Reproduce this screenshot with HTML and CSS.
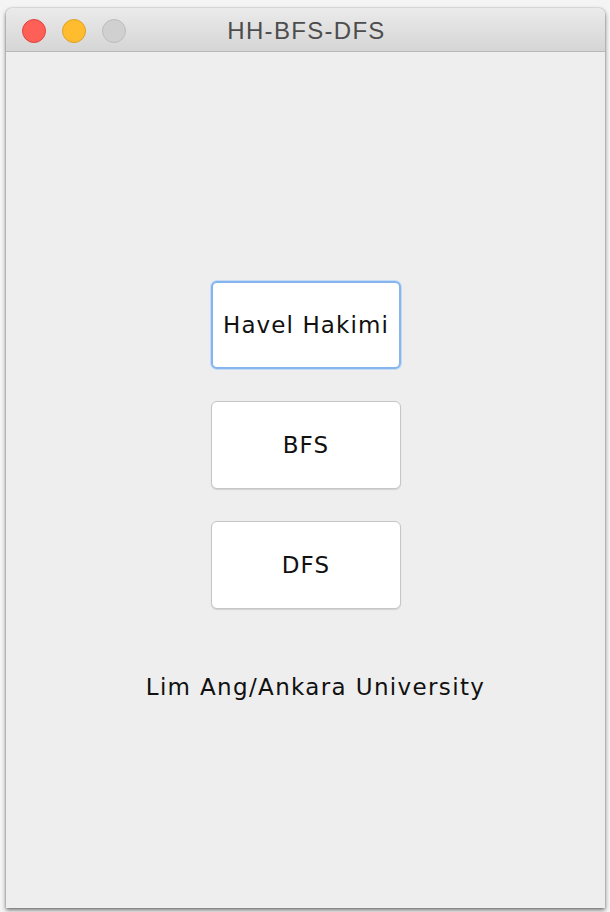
FILE: index.html
```html
<!DOCTYPE html>
<html>
<head>
<meta charset="utf-8">
<link rel="stylesheet" href="styles.css">
</head>
<body>
<div class="window">
  <div class="titlebar">
    <div class="lights">
      <span class="light red"></span>
      <span class="light yellow"></span>
      <span class="light grey"></span>
    </div>
    <div class="title">HH-BFS-DFS</div>
  </div>
  <div class="content">
    <button class="btn focused">Havel Hakimi</button>
    <button class="btn">BFS</button>
    <button class="btn">DFS</button>
    <div class="label">Lim Ang/Ankara University</div>
  </div>
</div>
</body>
</html>
```
FILE: styles.css
```css
html, body {
  margin: 0;
  padding: 0;
  background: #f4f4f4;
  width: 610px;
  height: 912px;
  overflow: hidden;
}
.window {
  margin: 8px 0 0 6px;
  width: 599px;
  height: 900px;
  border-radius: 6px 6px 0 0;
  background: #eeeeee;
  box-shadow: 0 2px 4px rgba(0,0,0,0.55), 0 0 1px rgba(0,0,0,0.5);
  display: flex;
  flex-direction: column;
  overflow: hidden;
  font-family: "DejaVu Sans", sans-serif;
}
.titlebar {
  position: relative;
  box-sizing: border-box;
  height: 44px;
  padding-top: 3px;
  background: linear-gradient(#ebebeb, #d5d5d5);
  border-bottom: 1px solid #b8b8b8;
  display: flex;
  align-items: center;
  flex-shrink: 0;
}
.lights {
  display: flex;
  gap: 16px;
  padding-left: 16px;
}
.light {
  width: 24px;
  height: 24px;
  border-radius: 50%;
  box-sizing: border-box;
}
.red { background: #fe5f57; border: 1px solid #e0443e; }
.yellow { background: #febc2e; border: 1px solid #dea123; }
.grey { background: #d0d0d0; border: 1px solid #bdbdbd; }
.title {
  position: absolute;
  left: 0;
  right: 0;
  top: 3px;
  bottom: 0;
  display: flex;
  align-items: center;
  justify-content: center;
  font-family: "Liberation Sans", "Helvetica", sans-serif;
  font-size: 24px;
  letter-spacing: 1.3px;
  color: #4d4d4d;
  padding-left: 2px;
}
.content {
  flex: 1;
  display: flex;
  flex-direction: column;
  align-items: center;
  padding-top: 229px;
}
.btn {
  width: 190px;
  height: 88px;
  margin-bottom: 32px;
  background: #ffffff;
  border: 1px solid #c6c6c6;
  border-radius: 6px;
  box-shadow: 0 1px 1px rgba(0,0,0,0.12);
  font-family: "DejaVu Sans", sans-serif;
  font-size: 23px;
  letter-spacing: 1.1px;
  color: #111;
  padding: 0 0 0 1px;
}
.btn.focused {
  border: 2px solid #86b5ee;
  box-shadow: 0 0 0 1px #c4dbf7;
}
.label {
  margin-top: 33px;
  font-size: 23px;
  letter-spacing: 1.35px;
  color: #111;
  padding-left: 20px;
}
```
